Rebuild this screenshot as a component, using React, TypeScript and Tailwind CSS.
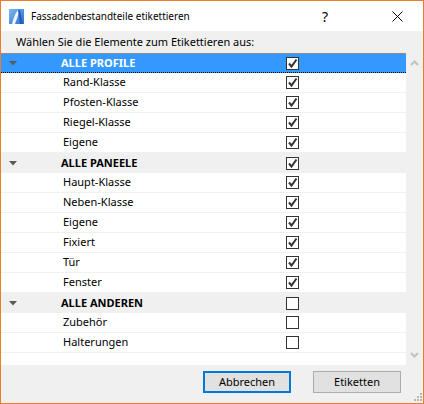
import React from 'react';

type Row = { label: string; header?: boolean; checked: boolean };

const rows: Row[] = [
  { label: 'ALLE PROFILE', header: true, checked: true },
  { label: 'Rand-Klasse', checked: true },
  { label: 'Pfosten-Klasse', checked: true },
  { label: 'Riegel-Klasse', checked: true },
  { label: 'Eigene', checked: true },
  { label: 'ALLE PANEELE', header: true, checked: true },
  { label: 'Haupt-Klasse', checked: true },
  { label: 'Neben-Klasse', checked: true },
  { label: 'Eigene', checked: true },
  { label: 'Fixiert', checked: true },
  { label: 'Tür', checked: true },
  { label: 'Fenster', checked: true },
  { label: 'ALLE ANDEREN', header: true, checked: false },
  { label: 'Zubehör', checked: false },
  { label: 'Halterungen', checked: false },
];

const Checkbox = ({ checked }: { checked: boolean }) => (
  <div className="w-[13px] h-[13px] border border-[#333333] bg-white flex items-center justify-center">
    {checked && (
      <svg width="11" height="11" viewBox="0 0 11 11">
        <path d="M2 5.5 L4.5 8.5 L9.5 1.5" fill="none" stroke="#333333" strokeWidth="2" />
      </svg>
    )}
  </div>
);

const Triangle = () => (
  <svg width="8" height="5" viewBox="0 0 8 5">
    <path d="M0 0 H8 L4 4.5 Z" fill="#5a5a5a" />
  </svg>
);

const ListRow = ({ row, selected }: { row: Row; selected: boolean }) => {
  let bg = 'bg-white border-b border-[#f0f0f0]';
  if (row.header) bg = 'bg-[#f0f0f0]';
  if (selected) bg = 'bg-[#3399ff] border-y border-dotted border-t-[#f08030] border-b-[#000000]';
  return (
    <div className={`h-[20px] flex items-center ${bg}`}>
      <div className="w-[60px] h-full flex items-center pl-[8px]">{row.header && <Triangle />}</div>
      <div
        className={`w-[225px] ${row.header ? 'font-bold' : 'pl-[2px]'} ${selected ? 'text-white' : 'text-[#000000]'}`}
      >
        {row.label}
      </div>
      <Checkbox checked={row.checked} />
    </div>
  );
};

export default function App() {
  return (
    <div
      className="w-[424px] h-[404px] border border-[#f07a2a] flex flex-col text-[11px] text-black"
      style={{ fontFamily: '"Noto Sans", "Open Sans", sans-serif' }}
    >
      <div className="h-[30px] bg-white flex items-center shrink-0">
        <div className="ml-[8px] w-[15px] h-[15px]">
          <svg width="15" height="15" viewBox="0 0 15 15">
            <defs>
              <linearGradient id="ig" x1="0" y1="0" x2="1" y2="1">
                <stop offset="0" stopColor="#7fb8ee" />
                <stop offset="1" stopColor="#2a6fd0" />
              </linearGradient>
            </defs>
            <rect x="0" y="0" width="15" height="15" fill="url(#ig)" />
            <path d="M3 15 Q5 6 9 1 L11 1 L6 15 Z" fill="#ffffff" opacity="0.9" />
            <path d="M9 1 L11 1 L14 15 L11 15 Z" fill="#1d5fc0" />
          </svg>
        </div>
        <div className="ml-[7px] text-[10px] text-black">Fassadenbestandteile etikettieren</div>
        <div className="ml-auto mr-[64px] text-[14px] text-black">?</div>
        <div className="mr-[20px]">
          <svg width="11" height="11" viewBox="0 0 11 11">
            <path d="M0.5 0.5 L10.5 10.5 M10.5 0.5 L0.5 10.5" stroke="#000" strokeWidth="1" />
          </svg>
        </div>
      </div>
      <div className="flex-1 bg-[#f0f0f0] flex flex-col">
        <div className="h-[22px] pl-[15px] flex items-center">Wählen Sie die Elemente zum Etikettieren aus:</div>
        <div className="h-[312px] flex">
          <div className="w-[405px] bg-white flex flex-col">
            {rows.map((r, i) => (
              <ListRow key={i} row={r} selected={i === 0} />
            ))}
          </div>
          <div className="flex-1 flex flex-col items-center justify-between py-[7px]">
            <svg width="9" height="6" viewBox="0 0 9 6">
              <path d="M1 5 L4.5 1.5 L8 5" fill="none" stroke="#c2c2c2" strokeWidth="2" />
            </svg>
            <svg width="9" height="6" viewBox="0 0 9 6">
              <path d="M1 1 L4.5 4.5 L8 1" fill="none" stroke="#c2c2c2" strokeWidth="2" />
            </svg>
          </div>
        </div>
        <div className="flex-1 flex items-start justify-end pt-[6px] pr-[22px] gap-[22px] relative">
          <button className="w-[88px] h-[22px] border-2 border-[#0078d7] bg-[#e1e1e1] text-[11px] flex items-center justify-center">
            Abbrechen
          </button>
          <button className="w-[88px] h-[22px] border border-[#adadad] bg-[#e1e1e1] text-[11px] flex items-center justify-center">
            Etiketten
          </button>
          <svg className="absolute right-[1px] bottom-[2px]" width="9" height="9" viewBox="0 0 9 9">
            <g fill="#b8b8b8">
              <rect x="7" y="1" width="2" height="2" />
              <rect x="4" y="4" width="2" height="2" />
              <rect x="7" y="4" width="2" height="2" />
              <rect x="1" y="7" width="2" height="2" />
              <rect x="4" y="7" width="2" height="2" />
              <rect x="7" y="7" width="2" height="2" />
            </g>
          </svg>
        </div>
      </div>
    </div>
  );
}
